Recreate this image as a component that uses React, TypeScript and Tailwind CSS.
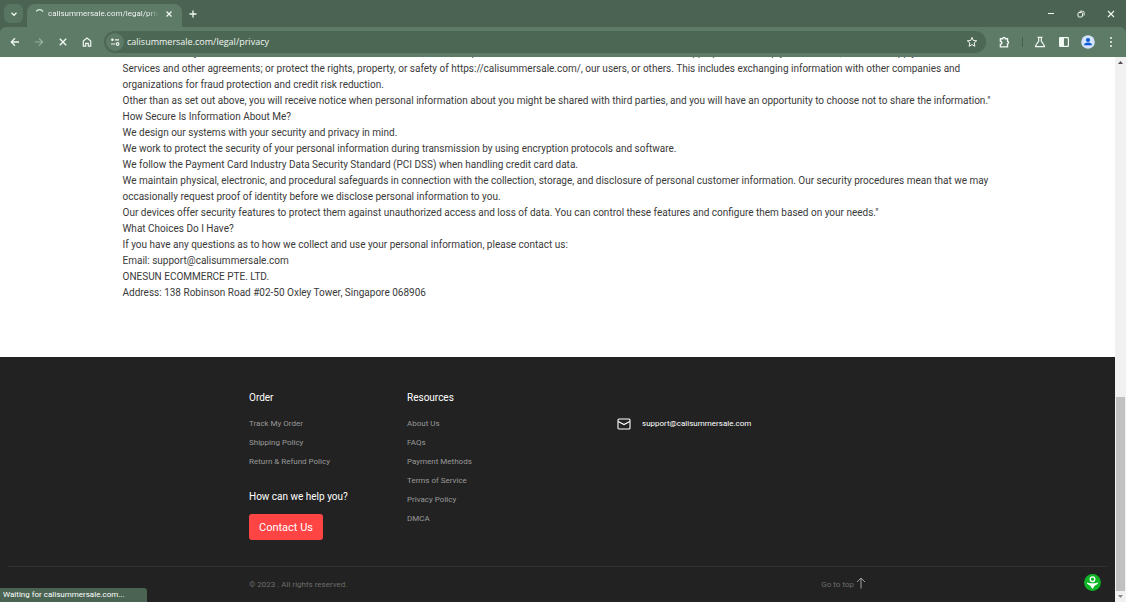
import { useState } from "react";

const policyLines = [
  "Where necessary for this website and all others: We release account and other personal information when we believe release is appropriate to comply with the law; enforce or apply our",
  "Services and other agreements; or protect the rights, property, or safety of https://calisummersale.com/, our users, or others. This includes exchanging information with other companies and",
  "organizations for fraud protection and credit risk reduction.",
  "Other than as set out above, you will receive notice when personal information about you might be shared with third parties, and you will have an opportunity to choose not to share the information.\"",
  "How Secure Is Information About Me?",
  "We design our systems with your security and privacy in mind.",
  "We work to protect the security of your personal information during transmission by using encryption protocols and software.",
  "We follow the Payment Card Industry Data Security Standard (PCI DSS) when handling credit card data.",
  "We maintain physical, electronic, and procedural safeguards in connection with the collection, storage, and disclosure of personal customer information. Our security procedures mean that we may",
  "occasionally request proof of identity before we disclose personal information to you.",
  "Our devices offer security features to protect them against unauthorized access and loss of data. You can control these features and configure them based on your needs.\"",
  "What Choices Do I Have?",
  "If you have any questions as to how we collect and use your personal information, please contact us:",
  "Email: support@calisummersale.com",
  "ONESUN ECOMMERCE PTE. LTD.",
  "Address: 138 Robinson Road #02-50 Oxley Tower, Singapore 068906",
];

const orderLinks = ["Track My Order", "Shipping Policy", "Return & Refund Policy"];

const resourceLinks = [
  "About Us",
  "FAQs",
  "Payment Methods",
  "Terms of Service",
  "Privacy Policy",
  "DMCA",
];

function TabStrip() {
  return (
    <div className="flex h-[27px] items-stretch pl-1">
      <button
        aria-label="Search tabs"
        className="mt-1 flex h-[19px] w-[19px] items-center justify-center rounded-md bg-[#587562]"
      >
        <svg width="8" height="8" viewBox="0 0 8 8" fill="none" stroke="currentColor" strokeWidth="1.3">
          <path d="M1.5 2.8 4 5.3l2.5-2.5" />
        </svg>
      </button>
      <div className="ml-1 flex flex-1 items-stretch pt-1">
        <div className="flex w-[155px] items-center rounded-t-lg bg-[#5d7b67] px-2 pb-1">
          <svg width="10" height="10" viewBox="0 0 10 10" fill="none" stroke="#dcebe0" strokeWidth="1.2">
            <path d="M1.2 2.4A4 4 0 0 1 8 2.6" />
          </svg>
          <span className="ml-[3px] w-[111px] overflow-hidden whitespace-nowrap bg-gradient-to-r from-white from-90% to-transparent bg-clip-text font-['Roboto',sans-serif] text-[8px] text-transparent">
            calisummersale.com/legal/privacy
          </span>
          <button aria-label="Close tab" className="ml-auto p-[2px]">
            <svg width="6" height="6" viewBox="0 0 6 6" stroke="currentColor" strokeWidth="1.2">
              <path d="M.5.5l5 5M5.5.5l-5 5" />
            </svg>
          </button>
        </div>
        <button aria-label="New tab" className="ml-[5px] p-[2px] pb-[6px]">
          <svg width="8" height="8" viewBox="0 0 8 8" stroke="currentColor" strokeWidth="1.3">
            <path d="M4 .5v7M.5 4h7" />
          </svg>
        </button>
      </div>
      <div className="flex items-center gap-[22px] pr-[11px]">
        <button aria-label="Minimize">
          <svg width="8" height="8" viewBox="0 0 8 8" stroke="currentColor">
            <path d="M1 3.5h6" />
          </svg>
        </button>
        <button aria-label="Restore">
          <svg width="8" height="8" viewBox="0 0 8 8" fill="none" stroke="currentColor">
            <rect x="1" y="2.5" width="4.5" height="4.5" rx="1" />
            <path d="M2.6 1.2h3a1.5 1.5 0 0 1 1.5 1.5v2.8" />
          </svg>
        </button>
        <button aria-label="Close">
          <svg width="8" height="8" viewBox="0 0 8 8" stroke="currentColor" strokeWidth="1.1">
            <path d="M1 1l6 6M7 1l-6 6" />
          </svg>
        </button>
      </div>
    </div>
  );
}

function Toolbar() {
  const [url, setUrl] = useState("calisummersale.com/legal/privacy");

  return (
    <div className="flex h-[30px] items-center rounded-t-md bg-[#5d7b67] px-[10px]">
      <div className="flex items-center gap-[14px]">
        <button aria-label="Back">
          <svg width="10" height="10" viewBox="0 0 10 10" fill="none" stroke="currentColor" strokeWidth="1.3">
            <path d="M9 5H1.5M5 1.3 1.3 5 5 8.7" />
          </svg>
        </button>
        <button aria-label="Forward" className="text-[#9bb1a2]">
          <svg width="10" height="10" viewBox="0 0 10 10" fill="none" stroke="currentColor" strokeWidth="1.2">
            <path d="M1 5h7.5M5 1.3 8.7 5 5 8.7" />
          </svg>
        </button>
        <button aria-label="Stop loading">
          <svg width="10" height="10" viewBox="0 0 10 10" stroke="currentColor" strokeWidth="1.4">
            <path d="M1.8 1.8l6.4 6.4M8.2 1.8 1.8 8.2" />
          </svg>
        </button>
        <button aria-label="Home">
          <svg width="10" height="10" viewBox="0 0 10 10" fill="none" stroke="currentColor" strokeWidth="1.2">
            <path d="M1.3 4 5 1.1 8.7 4v5.2H6.3V6.4H3.7v2.8H1.3z" />
          </svg>
        </button>
      </div>
      <div className="ml-3 flex h-[22px] flex-1 items-center rounded-full bg-[#4d6755] pl-[2px] pr-2">
        <span className="flex h-[18px] w-[18px] items-center justify-center rounded-full bg-[#5d7b67]">
          <svg width="10" height="10" viewBox="0 0 10 10" fill="none" stroke="currentColor" strokeWidth="1.2">
            <circle cx="2.4" cy="2.8" r="1.3" fill="currentColor" stroke="none" />
            <path d="M5 2.8h4M1 7h4" />
            <circle cx="7.6" cy="7" r="1.3" />
          </svg>
        </span>
        <input
          aria-label="Address"
          className="ml-[3px] flex-1 bg-transparent text-[9px] leading-4 outline-none"
          value={url}
          onChange={(e) => setUrl(e.target.value)}
        />
        <button aria-label="Bookmark this page">
          <svg width="12" height="12" viewBox="0 0 12 12" fill="none" stroke="currentColor">
            <path d="M6 1.4 7.3 4.5l3.4.3-2.6 2.2.8 3.3L6 8.6l-2.9 1.7.8-3.3-2.6-2.2 3.4-.3z" />
          </svg>
        </button>
      </div>
      <div className="ml-3 flex items-center">
        <button aria-label="Extensions">
          <svg width="12" height="12" viewBox="0 0 12 12" fill="none" stroke="currentColor" strokeWidth="1.4">
            <path d="M2.4 2.7h2.3a1.3 1.3 0 0 1 2.6 0h2.2v2.5a1.4 1.4 0 0 1 0 2.7v3H2.4V8.3a1.5 1.5 0 0 0 0-3z" />
          </svg>
        </button>
        <span className="ml-3 mr-[11px] h-[10px] w-px bg-[#466050]" />
        <button aria-label="Labs">
          <svg width="12" height="12" viewBox="0 0 12 12" fill="none" stroke="currentColor" strokeWidth="1.2">
            <path d="M3.5 1.4h5M4.7 1.4v3.7L1.5 10a.5.5 0 0 0 .4.7h8.2a.5.5 0 0 0 .4-.7L7.3 5.1V1.4" />
          </svg>
        </button>
        <button aria-label="Side panel" className="ml-3">
          <svg width="12" height="12" viewBox="0 0 12 12" fill="none" stroke="currentColor" strokeWidth="1.2">
            <rect x="1.6" y="1.6" width="8.8" height="8.8" rx=".6" />
            <path d="M2 2h4v8H2z" fill="currentColor" stroke="none" />
          </svg>
        </button>
        <button aria-label="Profile" className="ml-[11px]">
          <svg width="14" height="14" viewBox="0 0 14 14">
            <circle cx="7" cy="7" r="6.8" fill="#d3e3fd" />
            <circle cx="7" cy="4.9" r="2" fill="#0b57d0" />
            <path d="M3 10.2c0-1.7 2-2.6 4-2.6s4 .9 4 2.6z" fill="#0b57d0" />
          </svg>
        </button>
        <button aria-label="Menu" className="ml-[11px]">
          <svg width="10" height="12" viewBox="0 0 10 12" fill="currentColor">
            <circle cx="5" cy="2" r="1" />
            <circle cx="5" cy="6" r="1" />
            <circle cx="5" cy="10" r="1" />
          </svg>
        </button>
      </div>
    </div>
  );
}

function LinkList({ title, links }: { title: string; links: string[] }) {
  return (
    <div>
      <h2 className="text-[10px] leading-4 text-white">{title}</h2>
      <ul className="mt-2">
        {links.map((link) => (
          <li key={link} className="h-[19px] text-[8px] leading-[19px] text-[#999999]">
            <a href="#">{link}</a>
          </li>
        ))}
      </ul>
    </div>
  );
}

function Footer() {
  return (
    <footer className="bg-[#222222] pt-[33px]">
      <div className="mx-auto flex max-w-[617px]">
        <div className="w-[158px]">
          <LinkList title="Order" links={orderLinks} />
          <h2 className="mt-[18px] text-[10px] leading-4 text-white">How can we help you?</h2>
          <button className="mt-[9px] h-[26px] rounded-[3px] bg-[#ff4444] px-[10px] pt-px text-[11px] leading-4 text-white">
            Contact Us
          </button>
        </div>
        <div className="w-[210px]">
          <LinkList title="Resources" links={resourceLinks} />
        </div>
        <a href="#" className="mt-6 flex h-5 items-center gap-[11px] text-[8px] text-white">
          <svg width="14" height="12" viewBox="0 0 14 12" fill="none" stroke="currentColor" strokeWidth="1.1">
            <rect x="1" y="1" width="12" height="10" rx="1" />
            <path d="M1.2 3.4 7 6.6l5.8-3.2" />
          </svg>
          support@calisummersale.com
        </a>
      </div>
      <div className="mx-2 mt-[26px] border-t border-[#303030]">
        <div className="mx-auto flex h-[35px] max-w-[617px] items-center justify-between text-[8px] text-[#6d6d6d]">
          <span>© 2023 . All rights reserved.</span>
          <a href="#" className="flex items-center gap-[2px]">
            Go to top
            <svg width="10" height="12" viewBox="0 0 10 12" fill="none" stroke="#a3a3a3" className="mb-1">
              <path d="M5 11.5V1.2M1 5l4-4 4 4" />
            </svg>
          </a>
        </div>
      </div>
    </footer>
  );
}

function Scrollbar() {
  return (
    <div className="flex w-[11px] flex-col items-center bg-[#f1f1f1]">
      <svg width="11" height="11" viewBox="0 0 11 11" fill="#505050">
        <path d="M3 7l2.5-3L8 7z" />
      </svg>
      <div className="flex-1" />
      <div className="h-[194px] w-[9px] bg-[#c1c1c1]" />
      <svg width="11" height="11" viewBox="0 0 11 11" fill="#8a8a8a">
        <path d="M3 4l2.5 3L8 4z" />
      </svg>
    </div>
  );
}

export default function App() {
  return (
    <div className="relative flex h-screen flex-col overflow-hidden bg-white font-['Roboto',sans-serif]">
      <header className="shrink-0 bg-[#4a6352] font-['Open_Sans',sans-serif] text-[#f1f7f2]">
        <TabStrip />
        <Toolbar />
      </header>
      <div className="flex min-h-0 flex-1">
        <main className="flex min-w-0 flex-1 flex-col justify-end overflow-hidden">
          <article className="mx-auto w-full max-w-[870px] pb-14 text-[10px] leading-4 text-[#3a3a3a]">
            {policyLines.map((line) => (
              <p key={line} className="whitespace-nowrap">
                {line}
              </p>
            ))}
          </article>
          <Footer />
        </main>
        <Scrollbar />
      </div>
      <div className="absolute bottom-0 left-0 h-[14px] w-[147px] rounded-tr-[3px] bg-[#4a6352] pl-[3px] text-[8px] leading-[14px] text-white">
        Waiting for calisummersale.com...
      </div>
      <button aria-label="Open chat" className="absolute bottom-[11px] right-[25px]">
        <svg width="17" height="17" viewBox="0 0 17 17">
          <circle cx="8.5" cy="8.5" r="8.4" fill="#0fb525" />
          <circle cx="8.5" cy="5.2" r="2.3" fill="none" stroke="#fff" strokeWidth="1.3" />
          <path d="M3.2 8.4c3 1.2 7.6 1.2 10.6 0l.2 1.4-3.3 1.9L8.5 15l-2.2-3.3L3 9.8z" fill="#fff" />
        </svg>
      </button>
    </div>
  );
}
